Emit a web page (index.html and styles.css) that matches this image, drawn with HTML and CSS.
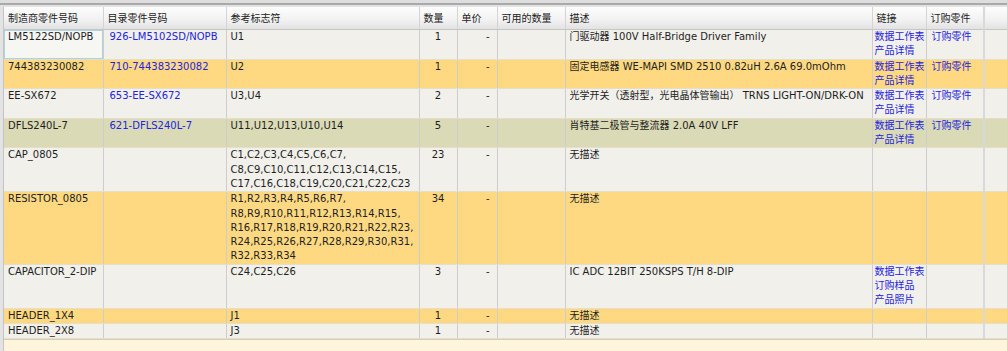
FILE: index.html
```html
<!DOCTYPE html>
<html lang="zh-CN">
<head>
<meta charset="utf-8">
<title>BOM</title>
<link rel="stylesheet" href="styles.css">
</head>
<body>
<div class="frame">
  <div class="topbar"></div>
  <div class="grid-wrap">
    <table class="bom">
      <colgroup>
        <col class="w1"><col class="w2"><col class="w3"><col class="w4"><col class="w5">
        <col class="w6"><col class="w7"><col class="w8"><col class="w9"><col class="w10">
      </colgroup>
      <thead>
        <tr>
          <th>制造商零件号码</th>
          <th>目录零件号码</th>
          <th>参考标志符</th>
          <th>数量</th>
          <th>单价</th>
          <th>可用的数量</th>
          <th>描述</th>
          <th>链接</th>
          <th>订购零件</th>
          <th class="last"></th>
        </tr>
      </thead>
      <tbody>
        <tr class="r-grey">
          <td class="focus">LM5122SD/NOPB</td>
          <td><a href="#">926-LM5102SD/NOPB</a></td>
          <td>U1</td>
          <td class="qty">1</td>
          <td class="price">-</td>
          <td></td>
          <td>门驱动器 100V Half-Bridge Driver Family</td>
          <td class="links"><a href="#">数据工作表</a><a href="#">产品详情</a></td>
          <td class="order"><a href="#">订购零件</a></td>
          <td class="last"></td>
        </tr>
        <tr class="r-yellow">
          <td>744383230082</td>
          <td><a href="#">710-744383230082</a></td>
          <td>U2</td>
          <td class="qty">1</td>
          <td class="price">-</td>
          <td></td>
          <td>固定电感器 WE-MAPI SMD 2510 0.82uH 2.6A 69.0mOhm</td>
          <td class="links"><a href="#">数据工作表</a><a href="#">产品详情</a></td>
          <td class="order"><a href="#">订购零件</a></td>
          <td class="last"></td>
        </tr>
        <tr class="r-grey">
          <td>EE-SX672</td>
          <td><a href="#">653-EE-SX672</a></td>
          <td>U3,U4</td>
          <td class="qty">2</td>
          <td class="price">-</td>
          <td></td>
          <td>光学开关（透射型，光电晶体管输出） TRNS LIGHT-ON/DRK-ON</td>
          <td class="links"><a href="#">数据工作表</a><a href="#">产品详情</a></td>
          <td class="order"><a href="#">订购零件</a></td>
          <td class="last"></td>
        </tr>
        <tr class="r-olive">
          <td>DFLS240L-7</td>
          <td><a href="#">621-DFLS240L-7</a></td>
          <td>U11,U12,U13,U10,U14</td>
          <td class="qty">5</td>
          <td class="price">-</td>
          <td></td>
          <td>肖特基二极管与整流器 2.0A 40V LFF</td>
          <td class="links"><a href="#">数据工作表</a><a href="#">产品详情</a></td>
          <td class="order"><a href="#">订购零件</a></td>
          <td class="last"></td>
        </tr>
        <tr class="r-grey">
          <td>CAP_0805</td>
          <td></td>
          <td>C1,C2,C3,C4,C5,C6,C7,<br>C8,C9,C10,C11,C12,C13,C14,C15,<br>C17,C16,C18,C19,C20,C21,C22,C23</td>
          <td class="qty">23</td>
          <td class="price">-</td>
          <td></td>
          <td>无描述</td>
          <td class="links"></td>
          <td class="order"></td>
          <td class="last"></td>
        </tr>
        <tr class="r-yellow">
          <td>RESISTOR_0805</td>
          <td></td>
          <td>R1,R2,R3,R4,R5,R6,R7,<br>R8,R9,R10,R11,R12,R13,R14,R15,<br>R16,R17,R18,R19,R20,R21,R22,R23,<br>R24,R25,R26,R27,R28,R29,R30,R31,<br>R32,R33,R34</td>
          <td class="qty">34</td>
          <td class="price">-</td>
          <td></td>
          <td>无描述</td>
          <td class="links"></td>
          <td class="order"></td>
          <td class="last"></td>
        </tr>
        <tr class="r-grey">
          <td>CAPACITOR_2-DIP</td>
          <td></td>
          <td>C24,C25,C26</td>
          <td class="qty">3</td>
          <td class="price">-</td>
          <td></td>
          <td>IC ADC 12BIT 250KSPS T/H 8-DIP</td>
          <td class="links"><a href="#">数据工作表</a><a href="#">订购样品</a><a href="#">产品照片</a></td>
          <td class="order"></td>
          <td class="last"></td>
        </tr>
        <tr class="r-yellow">
          <td>HEADER_1X4</td>
          <td></td>
          <td>J1</td>
          <td class="qty">1</td>
          <td class="price">-</td>
          <td></td>
          <td>无描述</td>
          <td class="links"></td>
          <td class="order"></td>
          <td class="last"></td>
        </tr>
        <tr class="r-grey">
          <td>HEADER_2X8</td>
          <td></td>
          <td>J3</td>
          <td class="qty">1</td>
          <td class="price">-</td>
          <td></td>
          <td>无描述</td>
          <td class="links"></td>
          <td class="order"></td>
          <td class="last"></td>
        </tr>
      </tbody>
    </table>
    <div class="filler"></div>
  </div>
</div>
</body>
</html>
```

FILE: styles.css
```css
html, body {
  margin: 0;
  padding: 0;
}

body {
  width: 1007px;
  height: 351px;
  overflow: hidden;
  background: #e3e3e3;
  font-family: "DejaVu Sans", "Noto Sans CJK SC", sans-serif;
  font-size: 10px;
  color: #1e1e1e;
}

.frame {
  display: flex;
  flex-direction: column;
  height: 351px;
}

.topbar {
  height: 3px;
  background: #dedede;
  border-bottom: 2px solid #a9a9a9;
  flex: none;
}

.grid-wrap {
  flex: 1;
  margin-left: 3px;
  margin-top: 2px;
  border-left: 1px solid #c4c4c4;
  background: #fff4dc;
  display: flex;
  flex-direction: column;
}

.bom {
  border-collapse: collapse;
  table-layout: fixed;
  width: 1003px;
  line-height: 14.3px;
}

.w1 { width: 99px; }
.w2 { width: 123px; }
.w3 { width: 193px; }
.w4 { width: 38px; }
.w5 { width: 40px; }
.w6 { width: 68px; }
.w7 { width: 307px; }
.w8 { width: 54px; }
.w9 { width: 58px; }
.w10 { width: 23px; }

.bom th {
  height: 19px;
  padding: 3px 4px 0;
  text-align: left;
  font-weight: normal;
  color: #222;
  white-space: nowrap;
  overflow: hidden;
  background: linear-gradient(#fdfdfd, #f1f1f1 60%, #e2e2e2);
  border-right: 1px solid #d4d4d4;
  border-bottom: 1px solid #c6c6c6;
}

.bom td {
  padding: 0 4px;
  vertical-align: top;
  white-space: nowrap;
  overflow: hidden;
  border-right: 1px solid #cdcdcd;
  border-bottom: 1px solid #e6dfc6;
}

.bom td:nth-child(2) {
  padding-left: 6px;
}

.r-grey td { background: #f1f0eb; }
.r-yellow td { background: #fed981; }
.r-olive td { background: #dadbb6; }

.bom td.focus {
  background: #f6f6f3;
  box-shadow: inset 0 0 0 1px #aed3de;
}

.bom td.qty {
  text-align: center;
  padding: 0 2px;
}

.bom td.price {
  text-align: right;
  padding-right: 7px;
}

.bom td.links {
  padding: 0 0 0 2px;
}

.bom td.order {
  padding-left: 5px;
}

.bom td.last,
.bom th.last {
  border-left: 2px solid #d9d9d9;
  border-right: none;
}

.bom a {
  color: #2323e0;
  text-decoration: none;
}

.bom td.links a {
  display: block;
}

.filler {
  flex: 1;
  border-top: 1px solid #d2cdbd;
  background: #fff4dc;
}
```
